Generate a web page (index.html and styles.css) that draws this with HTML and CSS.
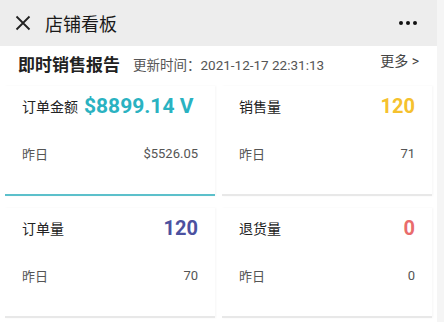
FILE: index.html
```html
<!DOCTYPE html>
<html lang="zh-CN">
<head>
    <meta charset="UTF-8">
    <meta name="viewport" content="width=device-width, initial-scale=1.0">
    <title>店铺看板</title>
    <link rel="stylesheet" href="styles.css">
</head>
<body>
    <div class="page">
        <header class="nav-bar">
            <svg class="close-icon" width="16" height="16" viewBox="0 0 16 16">
                <path d="M1.5 1.5 L14.5 14.5 M14.5 1.5 L1.5 14.5" stroke="#222" stroke-width="1.8" fill="none"/>
            </svg>
            <div class="nav-title">店铺看板</div>
            <div class="nav-more">
                <span class="dot"></span><span class="dot"></span><span class="dot"></span>
            </div>
        </header>

        <main class="report">
            <div class="report-head">
                <span class="report-title">即时销售报告</span>
                <span class="update-time">更新时间：<span class="time-num">2021-12-17 22:31:13</span></span>
                <span class="more-link">更多 &gt;</span>
            </div>

            <div class="card-grid">
                <div class="card active">
                    <div class="card-main start">
                        <span class="label">订单金额</span>
                        <span class="value teal">$8899.14 V</span>
                    </div>
                    <div class="card-sub">
                        <span>昨日</span>
                        <span>$5526.05</span>
                    </div>
                </div>
                <div class="card">
                    <div class="card-main">
                        <span class="label">销售量</span>
                        <span class="value yellow">120</span>
                    </div>
                    <div class="card-sub">
                        <span>昨日</span>
                        <span>71</span>
                    </div>
                </div>
                <div class="card">
                    <div class="card-main">
                        <span class="label">订单量</span>
                        <span class="value purple">120</span>
                    </div>
                    <div class="card-sub">
                        <span>昨日</span>
                        <span>70</span>
                    </div>
                </div>
                <div class="card">
                    <div class="card-main">
                        <span class="label">退货量</span>
                        <span class="value red">0</span>
                    </div>
                    <div class="card-sub">
                        <span>昨日</span>
                        <span>0</span>
                    </div>
                </div>
            </div>
        </main>
    </div>
</body>
</html>
```

FILE: styles.css
```css
* {
    margin: 0;
    padding: 0;
    box-sizing: border-box;
}

body {
    width: 444px;
    height: 322px;
    overflow: hidden;
    background: #f5f5f5;
    font-family: Roboto, "Noto Sans CJK SC", sans-serif;
    color: #222;
}

.page {
    width: 437px;
    height: 322px;
    background: #fff;
}

/* Top navigation */
.nav-bar {
    height: 46px;
    background: #ededed;
    display: flex;
    align-items: center;
    padding: 0 20px 0 15px;
}

.close-icon {
    flex: none;
}

.nav-title {
    margin-left: 14px;
    font-family: "Noto Sans CJK SC", sans-serif;
    font-size: 18px;
    color: #1a1a1a;
}

.nav-more {
    margin-left: auto;
    display: flex;
    gap: 3px;
}

.dot {
    width: 4px;
    height: 4px;
    border-radius: 50%;
    background: #111;
}

/* Report header */
.report-head {
    height: 34px;
    display: flex;
    align-items: center;
    padding: 0 18px 0 18px;
}

.report-title {
    font-family: "Noto Sans CJK SC", sans-serif;
    font-size: 17px;
    font-weight: bold;
    color: #222;
}

.update-time {
    margin-left: 13px;
    margin-top: 2px;
    font-size: 13.5px;
    color: #555;
}

.time-num {
    font-size: 13.5px;
}

.more-link {
    margin-left: auto;
    margin-top: -7px;
    font-size: 14px;
    color: #444;
}

/* Cards */
.card-grid {
    display: grid;
    grid-template-columns: 210px 210px;
    column-gap: 7px;
    row-gap: 12px;
    padding: 6px 0 0 5px;
}

.card {
    height: 110px;
    padding: 0 17px;
    background: #fff;
    border-bottom: 2px solid #e8e8e8;
    box-shadow: 1px 0 2px rgba(0, 0, 0, 0.04);
}

.card.active {
    border-bottom-color: #5cc0cb;
}

.card-main {
    height: 40px;
    display: flex;
    align-items: center;
    justify-content: space-between;
}

.card-main.start {
    justify-content: flex-start;
    gap: 6px;
}

.label {
    font-family: "Noto Sans CJK SC", sans-serif;
    font-size: 14px;
    color: #222;
}

.value {
    font-size: 20px;
    font-weight: bold;
}

.value.teal {
    font-size: 21px;
    color: #2ab2c1;
}

.value.yellow { color: #f5c12e; }
.value.purple { color: #4c519f; }
.value.red { color: #e96c6c; }

.card-sub {
    margin-top: 20px;
    height: 14px;
    display: flex;
    align-items: center;
    justify-content: space-between;
    font-size: 13px;
    color: #555;
}
```
